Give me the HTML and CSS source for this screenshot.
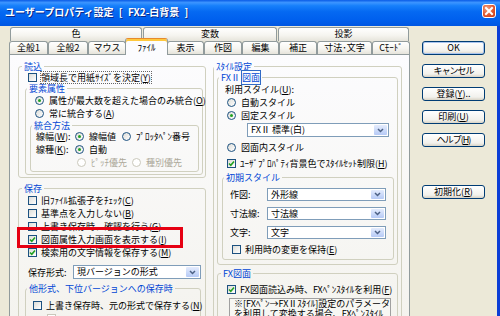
FILE: index.html
```html
<!DOCTYPE html>
<html lang="ja">
<head>
  <meta charset="UTF-8">
  <title>ユーザープロパティ設定</title>
  <link rel="stylesheet" href="styles.css">
</head>
<body>
  <div class="titlebar">
    <span class="title">ユーザープロパティ設定 [ FX2-白背景 ]</span>
    <span class="close">
      <svg width="14" height="14" viewBox="0 0 14 14"><path d="M4 4L10 10M10 4L4 10" stroke="#fff" stroke-width="2" stroke-linecap="square"/></svg>
    </span>
  </div>

  <div class="client">
    <div class="tabctl">
      <!-- back row -->
      <div class="tabrow back">
        <div class="tab">色</div>
        <div class="tab">変数</div>
        <div class="tab">投影</div>
      </div>
      <!-- front row -->
      <div class="tabrow front">
        <div class="tab">全般1</div>
        <div class="tab">全般2</div>
        <div class="tab">マウス</div>
        <div class="tab active">ﾌｧｲﾙ</div>
        <div class="tab">表示</div>
        <div class="tab">作図</div>
        <div class="tab">編集</div>
        <div class="tab">補正</div>
        <div class="tab">寸法･文字</div>
        <div class="tab">Cﾓｰﾄﾞ</div>
      </div>

      <div class="panel">
        <!-- left column -->
        <div class="col">
          <fieldset class="grp g-read">
            <legend>読込</legend>
            <div class="row first"><span class="cb"></span><span class="focus">領域長で用紙ｻｲｽﾞを決定(<u>Y</u>)</span></div>

            <fieldset class="grp g-attr">
              <legend>要素属性</legend>
              <div class="row opt"><span class="rb on"></span>属性が最大数を超えた場合のみ統合(<u>O</u>)</div>
              <div class="row opt"><span class="rb"></span>常に統合する(<u>A</u>)</div>

              <fieldset class="grp g-merge">
                <legend>統合方法</legend>
                <div class="row first">
                  <span class="lbl">線幅(<u>W</u>):</span>
                  <span class="pick"><span class="rb on"></span>線幅値</span>
                  <span class="rb"></span>ﾌﾟﾛｯﾀﾍﾟﾝ番号
                </div>
                <div class="row">
                  <span class="lbl">線種(<u>K</u>):</span>
                  <span class="pick"><span class="rb on"></span>自動</span>
                </div>
                <div class="row sub dis">
                  <span class="pick wide"><span class="rb off"></span>ﾋﾟｯﾁ優先</span>
                  <span class="rb off"></span>種別優先
                </div>
              </fieldset>
            </fieldset>
          </fieldset>

          <fieldset class="grp g-save">
            <legend>保存</legend>
            <div class="row"><span class="cb"></span>旧ﾌｧｲﾙ拡張子をﾁｪｯｸ(<u>C</u>)</div>
            <div class="row"><span class="cb"></span>基準点を入力しない(<u>B</u>)</div>
            <div class="row"><span class="cb"></span>上書き保存時、確認を行う(<u>G</u>)</div>
            <div class="row marked">
              <span class="cb on"><svg width="7" height="7" viewBox="0 0 7 7"><path d="M1 3.5L2.8 5.3L6 1.6" fill="none" stroke="#21A121" stroke-width="1.6"/></svg></span>図面属性入力画面を表示する(<u>I</u>)
              <span class="mark"></span>
            </div>
            <div class="row"><span class="cb on"><svg width="7" height="7" viewBox="0 0 7 7"><path d="M1 3.5L2.8 5.3L6 1.6" fill="none" stroke="#21A121" stroke-width="1.6"/></svg></span>検索用の文字情報を保存する(<u>M</u>)</div>

            <div class="row format">
              <span class="flbl">保存形式:</span>
              <span class="sel s-format"><span class="val">現バージョンの形式</span><span class="drop"><svg width="7" height="5" viewBox="0 0 7 5"><path d="M1 1L3.5 3.5L6 1" fill="none" stroke="#4D6185" stroke-width="1.5"/></svg></span></span>
            </div>

            <fieldset class="grp g-other">
              <legend>他形式、下位バージョンへの保存時</legend>
              <div class="row"><span class="cb"></span>上書き保存時、元の形式で保存する(<u>N</u>)</div>
              <div class="row sub"><span class="cb off"></span></div>
            </fieldset>
          </fieldset>
        </div>

        <!-- right column -->
        <div class="col">
          <fieldset class="grp g-style">
            <legend>ｽﾀｲﾙ設定</legend>

            <fieldset class="grp g-fx2">
              <legend>FXⅡ <span class="hl">図面</span></legend>
              <div class="row">利用スタイル(<u>U</u>):</div>
              <div class="row opt"><span class="rb"></span>自動スタイル</div>
              <div class="row opt"><span class="rb on"></span>固定スタイル</div>
              <span class="sel s-fixed"><span class="val">FXⅡ 標準(白)</span><span class="drop"><svg width="7" height="5" viewBox="0 0 7 5"><path d="M1 1L3.5 3.5L6 1" fill="none" stroke="#4D6185" stroke-width="1.5"/></svg></span></span>
              <div class="row opt"><span class="rb"></span>図面内スタイル</div>
              <div class="row bgset"><span class="cb on"><svg width="7" height="7" viewBox="0 0 7 7"><path d="M1 3.5L2.8 5.3L6 1.6" fill="none" stroke="#21A121" stroke-width="1.6"/></svg></span>ﾕｰｻﾞﾌﾟﾛﾊﾟﾃｨ背景色でｽﾀｲﾙｾｯﾄ制限(<u>H</u>)</div>

              <fieldset class="grp g-init">
                <legend>初期スタイル</legend>
                <div class="row pair"><span class="plbl">作図:</span><span class="sel s-init"><span class="val">外形線</span><span class="drop"><svg width="7" height="5" viewBox="0 0 7 5"><path d="M1 1L3.5 3.5L6 1" fill="none" stroke="#4D6185" stroke-width="1.5"/></svg></span></span></div>
                <div class="row pair"><span class="plbl">寸法線:</span><span class="sel s-init"><span class="val">寸法線</span><span class="drop"><svg width="7" height="5" viewBox="0 0 7 5"><path d="M1 1L3.5 3.5L6 1" fill="none" stroke="#4D6185" stroke-width="1.5"/></svg></span></span></div>
                <div class="row pair"><span class="plbl">文字:</span><span class="sel s-init"><span class="val">文字</span><span class="drop"><svg width="7" height="5" viewBox="0 0 7 5"><path d="M1 1L3.5 3.5L6 1" fill="none" stroke="#4D6185" stroke-width="1.5"/></svg></span></span></div>
                <div class="row keep"><span class="cb"></span>利用時の変更を保持(<u>E</u>)</div>
              </fieldset>
            </fieldset>

            <fieldset class="grp g-fx">
              <legend>FX図面</legend>
              <div class="row"><span class="cb on"><svg width="7" height="7" viewBox="0 0 7 7"><path d="M1 3.5L2.8 5.3L6 1.6" fill="none" stroke="#21A121" stroke-width="1.6"/></svg></span>FX図面読込み時、FXﾍﾟﾝｽﾀｲﾙを利用(<u>F</u>)</div>
              <div class="note">
                ※[FXﾍﾟﾝ→FXⅡｽﾀｲﾙ]設定のパラメータ<br>
                を利用して変換する場合、FXﾍﾟﾝｽﾀｲﾙ
              </div>
            </fieldset>
          </fieldset>
        </div>
      </div>
    </div>

    <div class="buttons">
      <div class="btn default">OK</div>
      <div class="btn narrow">キャンセル</div>
      <div class="btn">登録(<u>Y</u>)..</div>
      <div class="btn">印刷(<u>U</u>)</div>
      <div class="btn narrow">ヘルプ(<u>H</u>)</div>
      <div class="btn reset">初期化(<u>R</u>)</div>
    </div>
  </div>
</body>
</html>
```

FILE: styles.css
```css
* {
  box-sizing: border-box;
}
body {
  margin: 0;
  width: 500px;
  height: 316px;
  overflow: hidden;
  background-color: #ECE9D8;
  font-family: "Noto Sans CJK JP", sans-serif;
  font-size: 9px;
  line-height: 11px;
  color: #000;
}
u {
  text-decoration: underline;
  text-underline-offset: 1px;
}

/* title bar */
.titlebar {
  height: 26px;
  display: flex;
  justify-content: space-between;
  padding: 0 4px 0 5px;
  background: linear-gradient(#0A5BE6 0%, #3C95FF 10%, #1780FB 22%, #0569F2 45%, #0060EE 75%, #0056E2 100%);
}
.title {
  color: #fff;
  font-size: 10px;
  font-weight: bold;
  line-height: 24px;
  word-spacing: 3px;
  text-shadow: 1px 1px 0 #0A2A8A;
}
.close {
  width: 14px;
  height: 14px;
  margin-top: 4px;
  border: 1px solid #fff;
  border-radius: 3px;
  background: radial-gradient(circle at 35% 30%, #F0A080, #E0562E 55%, #C23A1A);
  display: flex;
}
.close svg {
  margin: -1px;
}

/* client */
.client {
  display: flex;
  height: 290px;
  border-right: 3px solid #0B3ED6;
}
.tabctl {
  margin-left: 9px;
  margin-top: 1px;
  width: 401px;
}
.tabrow {
  display: grid;
}
.tabrow.back {
  grid-template-columns: 132px 134px 131px;
  column-gap: 1px;
  padding-left: 1px;
  height: 14px;
}
.tabrow.front {
  grid-template-columns: 39px 40px 38px 41px 37px 38px 37px 38px 55px 38px;
  height: 13px;
}
.tab {
  border: 1px solid #919B9C;
  border-bottom: none;
  border-radius: 3px 3px 0 0;
  background: linear-gradient(#FFFFFF, #F6F5F0 55%, #E6E4DB);
  text-align: center;
  line-height: 12px;
}
.tab.active {
  margin: -3px -1px -1px;
  position: relative;
  z-index: 1;
  border-top: 1px solid #E68B2C;
  box-shadow: inset 0 2px 0 #FFC83C;
  background: #FCFCFE;
  padding-top: 3px;
}

/* tab page */
.panel {
  height: 270px;
  border: 1px solid #919B9C;
  background: linear-gradient(#FCFCFE, #F4F3EE);
  display: grid;
  grid-template-columns: 188px 189px;
  column-gap: 7px;
  align-items: start;
  padding: 6px 8px 0 8px;
}

/* group boxes */
.grp {
  margin: 0;
  min-width: 0;
  border: 1px solid #D0D0BF;
  border-radius: 3px;
  padding: 0 2px 2px 6px;
}
.grp legend {
  color: #0046D5;
  padding: 0 2px;
  margin-left: -3px;
  line-height: 11px;
}
.g-attr {
  padding: 0 3px 2px 4px;
}
.g-merge {
  padding: 0 0 2px 4px;
}
.g-save {
  margin-top: 5px;
  padding-bottom: 20px;
}
.g-other {
  margin-top: 4px;
  margin-right: 2px;
  padding: 5px 2px 20px 4px;
}
.g-style {
  padding: 0 3px 20px 3px;
}
.g-fx2 {
  padding: 0 3px 4px 4px;
}
.g-init {
  margin-top: 2px;
  padding: 0 2px 3px 4px;
}
.g-fx {
  margin-top: 3px;
  padding: 4px 2px 20px 6px;
}
.hl {
  outline: 1px solid #316AC5;
  outline-offset: 0;
}

/* rows */
.row {
  display: flex;
  align-items: center;
  height: 13px;
  white-space: nowrap;
  padding-left: 3px;
}
.row.first {
  margin-top: -1px;
}
.row.opt {
  padding-left: 5px;
}
.g-read > .row.first {
  height: 12px;
}
.g-merge .row {
  padding-left: 1px;
}
.g-merge .row.sub {
  padding-left: 42px;
}
.lbl {
  width: 39px;
}
.pick {
  display: flex;
  align-items: center;
  width: 47px;
}
.pick.wide {
  width: 55px;
}
.dis {
  color: #ACA899;
}
.focus {
  outline: 1px dotted #666;
}

/* check boxes and radio buttons */
.cb, .rb {
  flex: none;
  width: 9px;
  height: 9px;
  border: 1px solid #1C5180;
  background: linear-gradient(135deg, #DCDCD7, #FFFFFF);
  display: flex;
  align-items: center;
  justify-content: center;
}
.cb {
  margin-right: 4px;
}
.rb {
  border-radius: 50%;
  margin-right: 5px;
}
.rb.on::after {
  content: "";
  width: 3px;
  height: 3px;
  border-radius: 50%;
  background: #21A121;
}
.rb.off, .cb.off {
  border-color: #CAC8BB;
  background: #FFFFFF;
}

/* combo boxes */
.sel {
  display: flex;
  height: 14px;
  border: 1px solid #7F9DB9;
  background: #fff;
}
.sel .val {
  flex: 1;
  padding-left: 3px;
  line-height: 12px;
}
.sel .drop {
  width: 13px;
  margin: 1px;
  border-radius: 1px;
  background: linear-gradient(#E4ECFD, #B6CAF6);
  display: flex;
  align-items: center;
  justify-content: center;
}

/* save group */
.marked {
  position: relative;
}
.mark {
  position: absolute;
  left: -8px;
  top: -6px;
  width: 166px;
  height: 21px;
  border: 3px solid #E60012;
}
.row.format {
  margin-top: 6px;
  height: 14px;
}
.flbl {
  width: 45px;
}
.s-format {
  width: 128px;
}
.g-other .row.sub {
  padding-left: 17px;
}

/* style group */
.s-fixed {
  width: 142px;
  margin: 1px 0 4px 25px;
}
.row.bgset {
  margin-top: 3px;
  padding-left: 5px;
}
.row.pair {
  height: 13px;
  margin-top: 6px;
}
.row.pair:first-of-type {
  margin-top: 5px;
}
.plbl {
  width: 37px;
}
.s-init {
  width: 119px;
  height: 13px;
}
.s-init .val {
  line-height: 11px;
}
.row.keep {
  margin-top: 4px;
  padding-left: 5px;
}
.note {
  margin: 2px 4px 0 5px;
  padding: 0 4px;
  border: 1px solid #A0A0A0;
  background: #F7F7F3;
  line-height: 10px;
  white-space: nowrap;
  overflow: hidden;
}

/* command buttons */
.buttons {
  margin-left: 12px;
  margin-top: 15px;
  display: flex;
  flex-direction: column;
  gap: 9px;
}
.btn {
  width: 63px;
  height: 14px;
  border: 1px solid #003C74;
  border-radius: 3px;
  background: linear-gradient(#FFFFFF, #F2F1EC 75%, #D8D3C6);
  text-align: center;
  line-height: 12px;
}
.btn.narrow {
  letter-spacing: -1px;
}
.btn.default {
  box-shadow: inset 0 0 0 1px #A9C4EE;
}
.btn.reset {
  margin-top: 29px;
}
```
